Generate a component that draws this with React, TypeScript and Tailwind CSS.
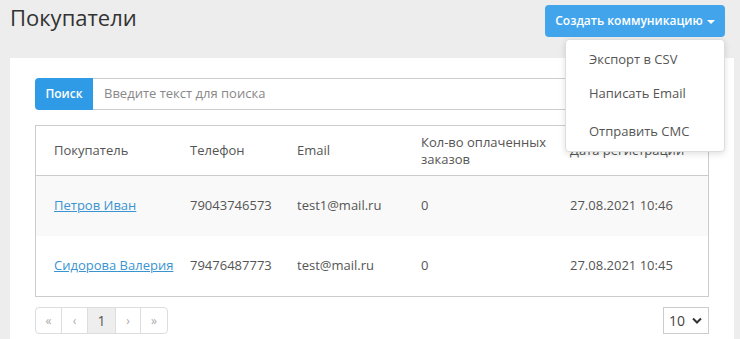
import { useState } from "react";

type Buyer = {
  name: string;
  phone: string;
  email: string;
  orders: number;
  date: string;
};

const buyers: Buyer[] = [
  { name: "Петров Иван", phone: "79043746573", email: "test1@mail.ru", orders: 0, date: "27.08.2021 10:46" },
  { name: "Сидорова Валерия", phone: "79476487773", email: "test@mail.ru", orders: 0, date: "27.08.2021 10:45" },
];

const cols = "grid grid-cols-[135px_107px_124px_149px_1fr]";

const App = () => {
  const [query, setQuery] = useState("");

  return (
    <div className="min-h-[339px] bg-[#ededed] px-[10px] pt-[3px] font-['Open_Sans',sans-serif] text-[13px] text-[#555]">
      {/* header */}
      <div className="flex items-start justify-between">
        <h1 className="text-[22px] leading-[28px] text-[#333]">Покупатели</h1>
        <div className="relative mr-[5px] mt-[2px]">
          <button className="flex h-[32px] w-[180px] items-center justify-center gap-[4px] rounded-[4px] bg-[#42a5ec] text-[12px] font-semibold text-white">
            Создать коммуникацию
            <span className="mt-[1px] h-0 w-0 border-x-[4px] border-t-[4px] border-x-transparent border-t-white" />
          </button>
          {/* dropdown */}
          <div className="absolute right-0 top-[34px] z-10 flex w-[160px] flex-col rounded-[4px] border border-[#ddd] bg-white pb-[3px] pt-[3px] leading-[19px] shadow-[0_2px_6px_rgba(0,0,0,0.12)]">
            <a className="pb-[7px] pl-[23px] pt-[7px]">Экспорт в CSV</a>
            <a className="pb-[8px] pl-[23px] pt-[8px]">Написать Email</a>
            <a className="pb-[7px] pl-[23px] pt-[11px]">Отправить СМС</a>
          </div>
        </div>
      </div>

      {/* card */}
      <div className="mt-[21px] min-h-[290px] w-[724px] bg-white px-[25px] pt-[20px]">
        {/* search */}
        <div className="flex h-[32px]">
          <button className="w-[58px] rounded-l-[4px] bg-[#2f9ae6] text-[12px] font-semibold text-white">Поиск</button>
          <input
            value={query}
            onChange={(e) => setQuery(e.target.value)}
            placeholder="Введите текст для поиска"
            className="flex-1 border border-l-0 border-[#ccc] px-[11px] text-[13px] text-[#555] outline-none placeholder:text-[#888]"
          />
        </div>

        {/* table */}
        <div className="mt-[15px] border border-[#ccc]">
          <div className={`${cols} h-[50px] items-center border-b border-[#ccc] leading-[17px]`}>
            <div className="pl-[18px]">Покупатель</div>
            <div className="pl-[19px]">Телефон</div>
            <div className="pl-[19px]">Email</div>
            <div className="pl-[19px]">Кол-во оплаченных заказов</div>
            <div className="pl-[19px]">Дата регистрации</div>
          </div>
          {buyers.map((b, i) => (
            <div
              key={b.phone}
              className={`${cols} h-[60px] items-center ${i % 2 === 0 ? "bg-[#f9f9f9]" : "bg-white"}`}
            >
              <div className="whitespace-nowrap pl-[18px]">
                <a href="#" className="text-[#3a94d0] underline">{b.name}</a>
              </div>
              <div className="pl-[19px]">{b.phone}</div>
              <div className="pl-[19px]">{b.email}</div>
              <div className="pl-[19px]">{b.orders}</div>
              <div className="pl-[19px]">{b.date}</div>
            </div>
          ))}
        </div>

        {/* pagination */}
        <div className="mt-[10px] flex items-center justify-between">
          <div className="flex h-[27px] overflow-hidden rounded-[4px] border border-[#ddd] text-[12px]">
            <span className="flex w-[26px] items-center justify-center border-r border-[#ddd] text-[#aaa]">«</span>
            <span className="flex w-[26px] items-center justify-center border-r border-[#ddd] text-[#aaa]">‹</span>
            <span className="flex w-[28px] items-center justify-center border-r border-[#ddd] bg-[#eee] text-[14px] text-[#555]">1</span>
            <span className="flex w-[25px] items-center justify-center border-r border-[#ddd] text-[#aaa]">›</span>
            <span className="flex w-[26px] items-center justify-center text-[#aaa]">»</span>
          </div>
          <div className="flex h-[27px] w-[46px] items-center justify-between border border-[#ccc] pl-[5px] pr-[6px] text-[14px] text-[#444]">
            10
            <svg width="10" height="7" viewBox="0 0 10 7">
              <path d="M1 1.5 L5 5.5 L9 1.5" fill="none" stroke="#333" strokeWidth="2" />
            </svg>
          </div>
        </div>
      </div>
    </div>
  );
};

export default App;
